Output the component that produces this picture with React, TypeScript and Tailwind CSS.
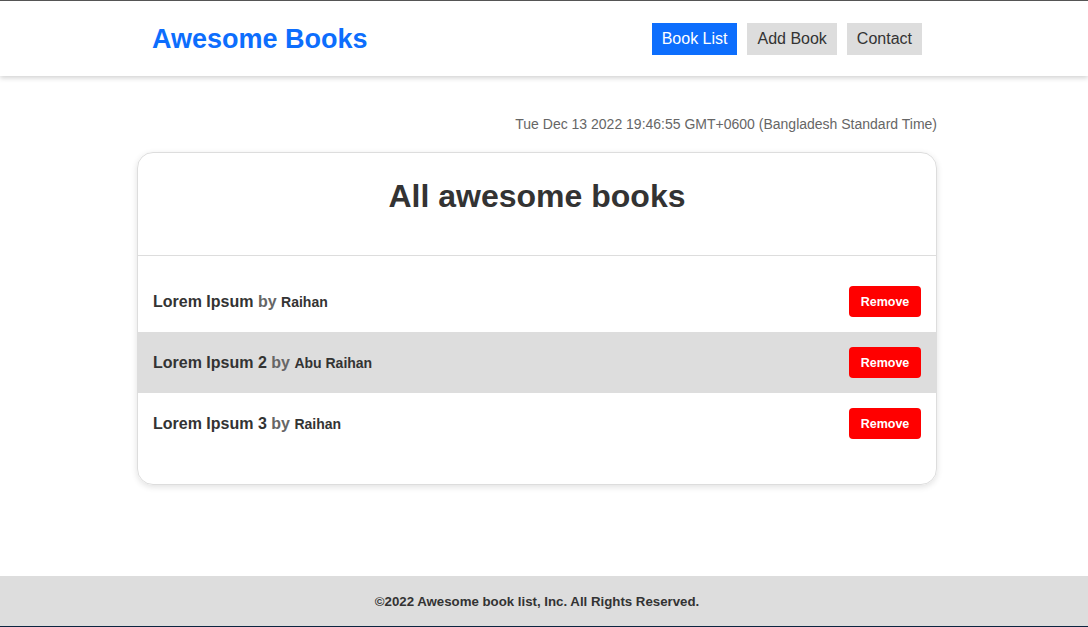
import React from 'react';

type Book = { id: number; title: string; author: string };

const books: Book[] = [
    { id: 1, title: 'Lorem Ipsum', author: 'Raihan' },
    { id: 2, title: 'Lorem Ipsum 2', author: 'Abu Raihan' },
    { id: 3, title: 'Lorem Ipsum 3', author: 'Raihan' },
];

const App: React.FC = () => {
    return (
        <div className="h-[627px] flex flex-col bg-white text-[#333] font-['Liberation_Sans',Arial,sans-serif] overflow-hidden">
            {/* Header */}
            <header className="h-[76px] shrink-0 border-t border-[#555] bg-white shadow-[0_2px_5px_rgba(0,0,0,0.18)] relative z-10">
                <div className="w-[800px] ml-[137px] h-full px-[15px] flex items-center justify-between">
                    <h1 className="text-[27px] font-bold text-[#0d6efd] leading-none mt-[1px]">Awesome Books</h1>
                    <nav className="flex gap-[10px]">
                        <button className="h-8 px-2.5 text-[16px] bg-[#0d6efd] text-white">Book List</button>
                        <button className="h-8 px-2.5 text-[16px] bg-[#ddd] text-[#333]">Add Book</button>
                        <button className="h-8 px-2.5 text-[16px] bg-[#ddd] text-[#333]">Contact</button>
                    </nav>
                </div>
            </header>

            {/* Main */}
            <main className="flex-1">
                <div className="w-[800px] ml-[137px]">
                    <p className="text-right text-[14px] text-[#666] mt-[40px] leading-[16px]">
                        Tue Dec 13 2022 19:46:55 GMT+0600 (Bangladesh Standard Time)
                    </p>
                    <section className="mt-[20px] border border-[#ddd] rounded-[16px] shadow-[0_2px_6px_rgba(0,0,0,0.12)] overflow-hidden">
                        <div className="h-[103px] border-b border-[#ddd] flex justify-center pt-[25px]">
                            <h2 className="text-[32px] font-bold leading-[37px] text-[#333]">All awesome books</h2>
                        </div>
                        <ul className="pt-[15px] pb-[30px]">
                            {books.map((book, i) => (
                                <li
                                    key={book.id}
                                    className={`h-[61px] px-[15px] flex items-center justify-between ${i % 2 === 1 ? 'bg-[#ddd]' : 'bg-white'}`}
                                >
                                    <p className="font-bold text-[16px]">
                                        {book.title} <span className="text-[#666]">by</span>{' '}
                                        <span className="text-[14px] text-[#333]">{book.author}</span>
                                    </p>
                                    <button className="w-[72px] h-[31px] pt-[1px] rounded-[4px] bg-[#f00] text-white text-[12.5px] font-bold">Remove</button>
                                </li>
                            ))}
                        </ul>
                    </section>
                </div>
            </main>

            {/* Footer */}
            <footer className="h-[51px] shrink-0 bg-[#ddd] border-b border-[#0b2540] flex items-center justify-center pr-[14px] pt-[2px]">
                <p className="text-[13.25px] font-bold text-[#333]">©2022 Awesome book list, Inc. All Rights Reserved.</p>
            </footer>
        </div>
    );
};

export default App;
